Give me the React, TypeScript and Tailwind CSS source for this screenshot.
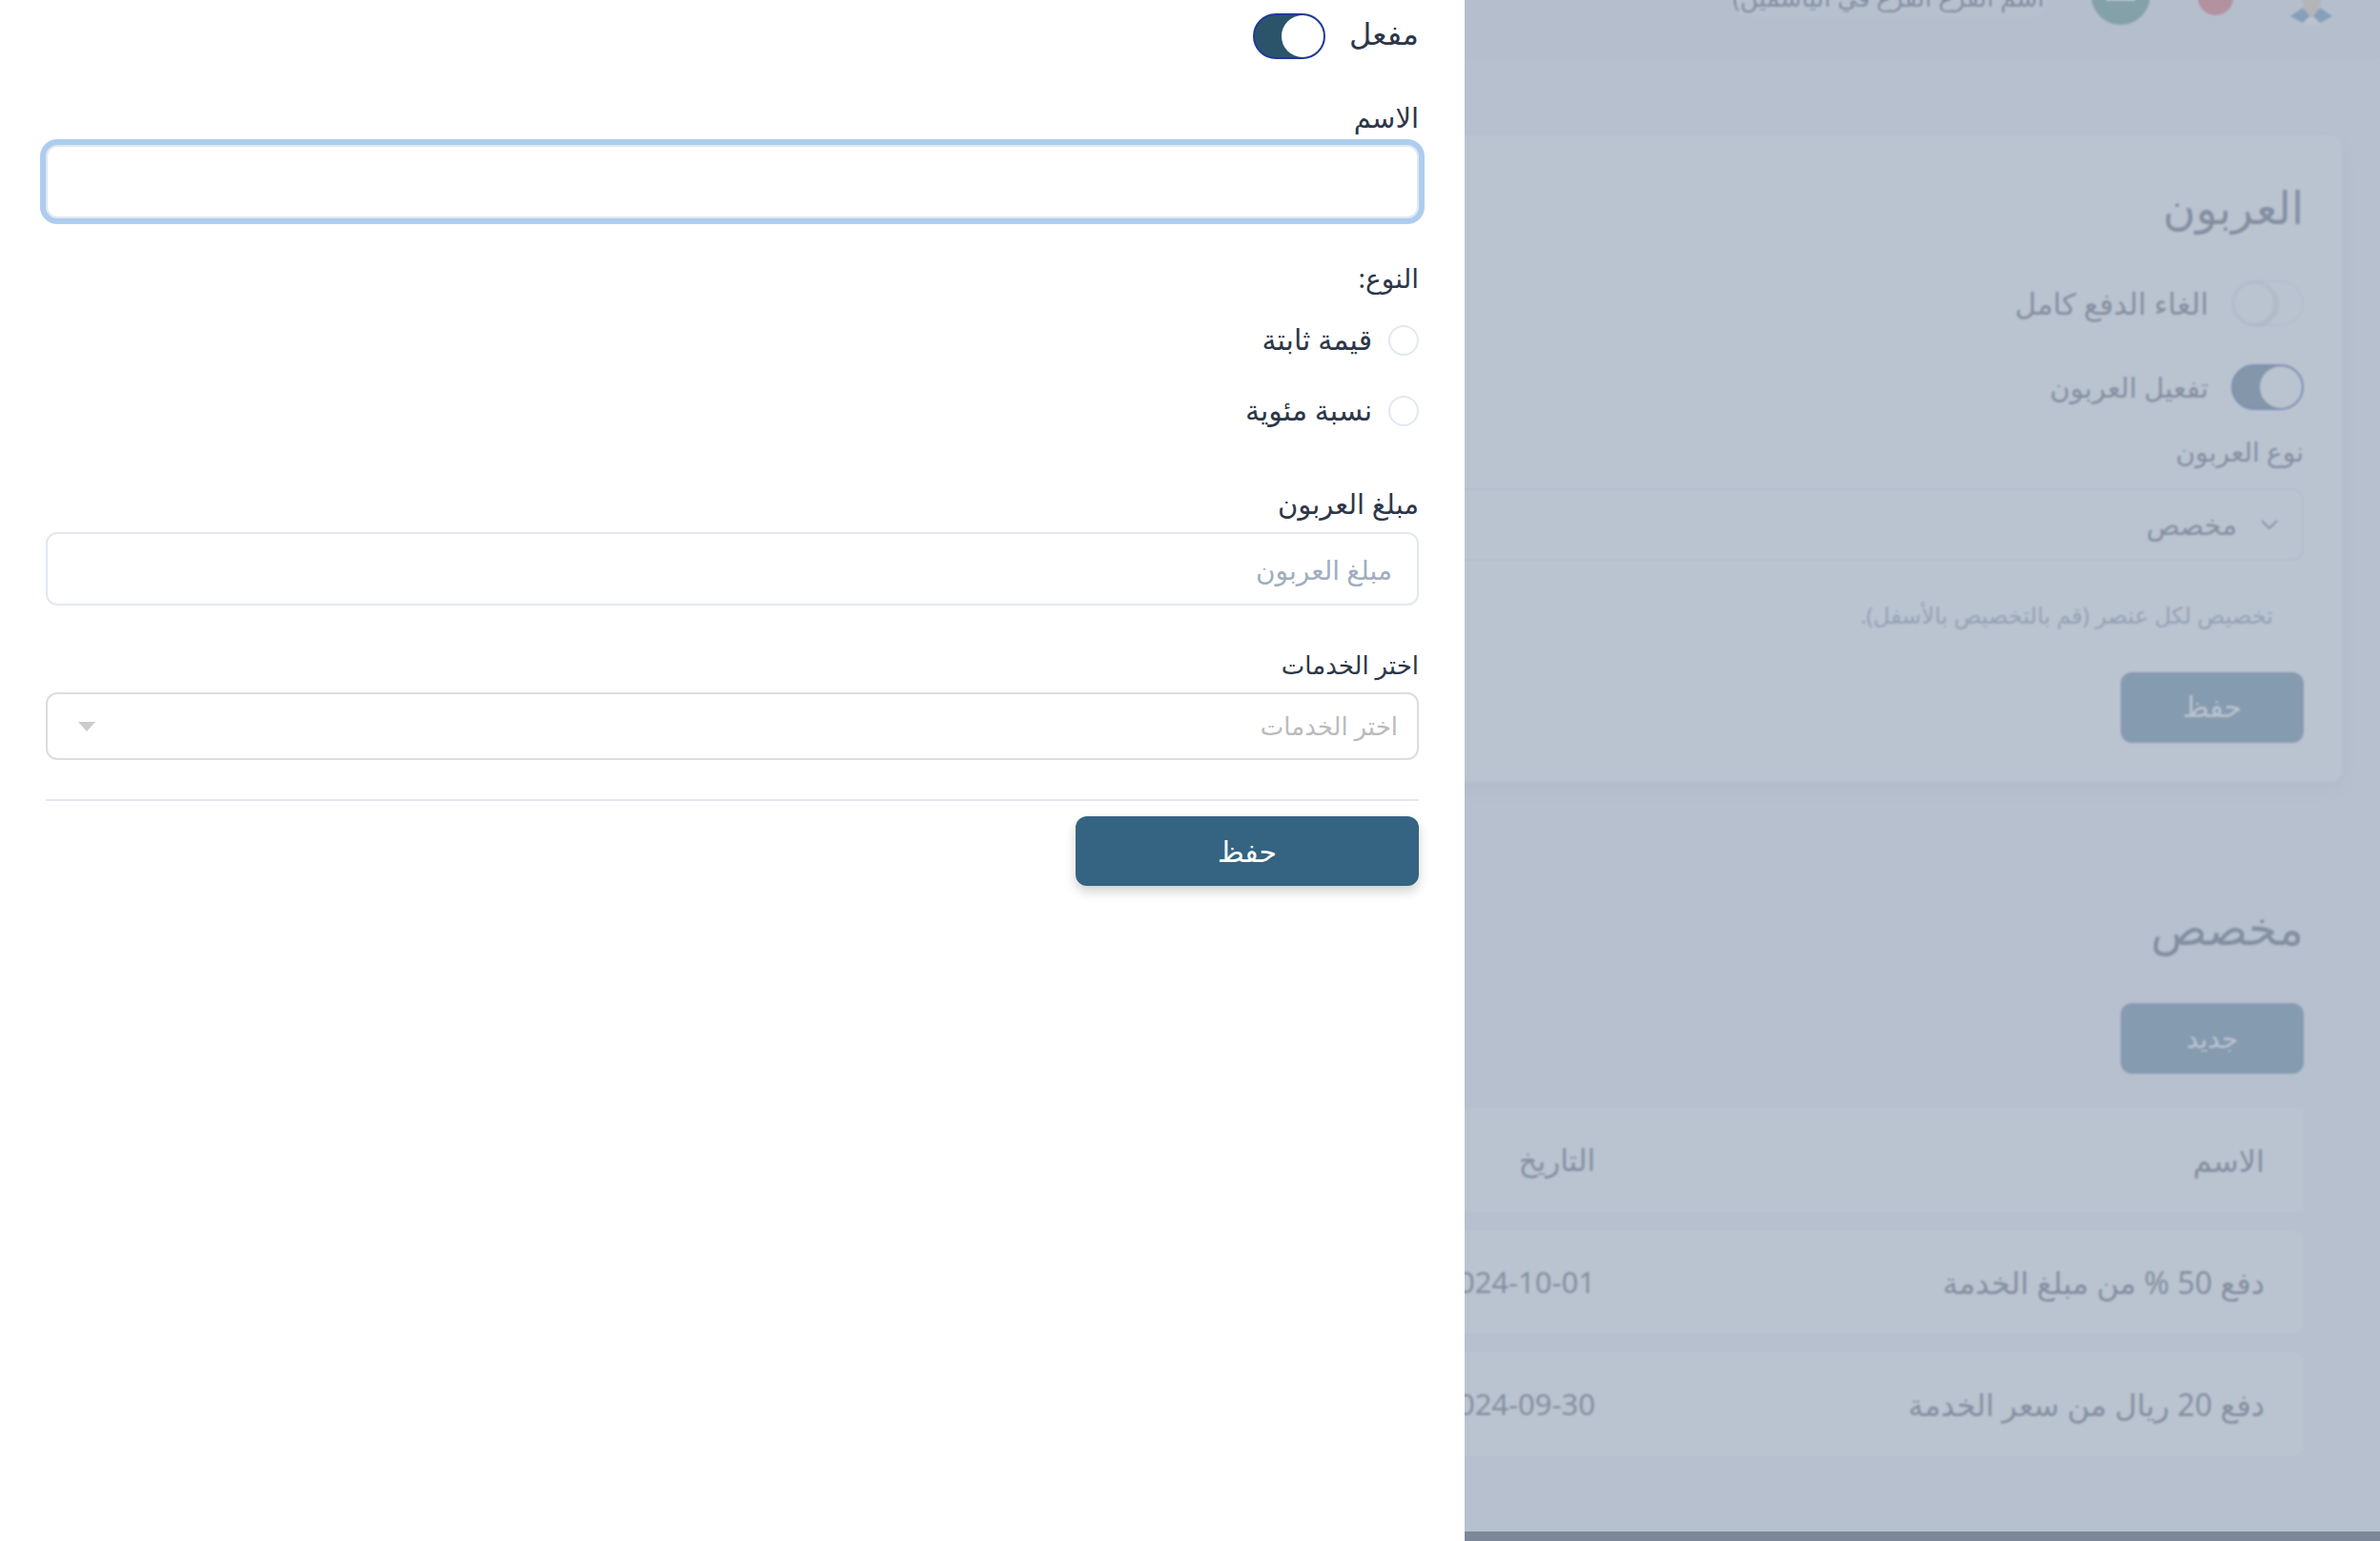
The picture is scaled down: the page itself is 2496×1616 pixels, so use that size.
const Toggle = ({ on }: { on: boolean }) => (
  <div
    className={`flex h-[48px] w-[76px] shrink-0 rounded-full border-2 ${
      on ? "border-[#1e3a9a] bg-[#2b546b] justify-start" : "border-[#e2e8f0] bg-white justify-end"
    }`}
  >
    <div
      className={`h-[44px] w-[44px] rounded-full bg-white ${
        on ? "" : "border-2 border-[#e2e8f0] shadow-[3px_1px_4px_rgba(0,0,0,0.2)]"
      }`}
    />
  </div>
);

const Label = ({ children, className }: { children: string; className?: string }) => (
  <div className={`h-[36px] whitespace-nowrap leading-[36px] text-[#2d3748] ${className ?? "text-[28px]"}`}>{children}</div>
);

const Radio = ({ text, className }: { text: string; className?: string }) => (
  <div className={`flex h-[32px] items-center gap-[17px] ${className ?? ""}`}>
    <div className="h-[32px] w-[32px] rounded-full border-2 border-[#e2e8f0] bg-white" />
    <span className="pb-[3px] text-[30px] text-[#2d3748]">{text}</span>
  </div>
);

const Row = ({ name, date, className }: { name: string; date: string; className?: string }) => (
  <div className={`flex h-[109px] items-center rounded-[12px] bg-white pr-[41px] text-[#2d3748] ${className ?? ""}`}>
    <div className="w-[702px] shrink-0 text-[32px]">{name}</div>
    <div className="text-[31px]">{date}</div>
  </div>
);

export default function App() {
  return (
    <div dir="rtl" className="relative flex h-[1616px] w-[2496px] overflow-hidden bg-[#eef1f5] font-['Noto_Sans','DejaVu_Sans',sans-serif]">
      {/* background page */}
      <div className="flex h-full w-[960px] shrink-0 flex-col overflow-hidden">
        <header className="flex h-[60px] shrink-0 items-start border-b-2 border-[#e2e6ec] bg-[#e9ecf0] pr-[49px]">
          <div className="relative -mt-[36px] h-[62px] w-[45px] shrink-0">
            <svg viewBox="0 0 45 62" className="h-[62px] w-[45px]">
              <circle cx="22" cy="36" r="10" fill="#e9c4a8" />
              <path d="M14 44 L30 44 L26 54 L18 54 Z" fill="#e9c4a8" />
              <path d="M12 54 L32 54 L32 62 L12 62 Z" fill="#ffffff" />
              <path d="M0 53 L13 44 L20 53 L13 60 Z" fill="#3b7aa6" />
              <path d="M44 53 L31 44 L24 53 L31 60 Z" fill="#3b7aa6" />
            </svg>
          </div>
          <div className="-mt-[21px] mr-[60px] flex h-[37px] w-[37px] shrink-0 items-start justify-center overflow-hidden rounded-full bg-[#e53e3e] text-[20px] leading-[26px] text-white">
            74
          </div>
          <div className="-mt-[36px] mr-[50px] flex h-[62px] w-[62px] shrink-0 items-center justify-center rounded-full bg-[#2f7d6d]">
            <div className="mt-[10px] h-[2px] w-[30px] bg-white" />
          </div>
          <div className="-mt-[23px] mr-[45px] flex h-[40px] items-center whitespace-nowrap rounded-full bg-[#f4f6f8] px-[4px] text-[26px] text-[#2d3748]">
            اسم الفرع الفرع في الياسمين)
          </div>
        </header>

        <main className="flex flex-1 flex-col pr-[40px]">
          <section className="mt-[82px] flex h-[678px] w-[1400px] shrink-0 flex-col rounded-[12px] bg-white pr-[40px] shadow-[0_8px_16px_rgba(0,0,0,0.08)]">
            <h2 className="mt-[47px] h-[56px] text-[47px] leading-[56px] text-[#2d3748]">العربون</h2>
            <div className="mt-[49px] flex items-center gap-[24px]">
              <Toggle on={false} />
              <span className="text-[31px] text-[#2d3748]">الغاء الدفع كامل</span>
            </div>
            <div className="mt-[40px] flex items-center gap-[24px]">
              <Toggle on />
              <span className="text-[29px] text-[#2d3748]">تفعيل العربون</span>
            </div>
            <Label className="mt-[25px] text-[28px]">نوع العربون</Label>
            <div className="mt-[21px] flex h-[76px] w-[1320px] items-center gap-[24px] rounded-[12px] border-2 border-[#e2e8f0] pr-[24px] text-[29px] text-[#2d3748]">
              <svg viewBox="0 0 20 12" className="h-[12px] w-[20px]" fill="none" stroke="#4a5568" strokeWidth="2">
                <path d="M2 2 L10 10 L18 2" />
              </svg>
              <span>مخصص</span>
            </div>
            <p className="mr-[32px] mt-[41px] h-[32px] text-[24px] leading-[32px] text-[#718096]">تخصيص لكل عنصر (قم بالتخصيص بالأسفل).</p>
            <button className="mt-[44px] h-[74px] w-[192px] rounded-[12px] bg-[#346482] pb-[3px] text-[30px] text-white">حفظ</button>
          </section>

          <section className="mr-[40px] flex w-[1360px] shrink-0 flex-col">
            <h2 className="mt-[122px] h-[60px] text-[49px] leading-[60px] text-[#2d3748]">مخصص</h2>
            <button className="mt-[50px] h-[74px] w-[192px] rounded-[12px] bg-[#346482] pb-[2px] text-[28px] text-white">جديد</button>
            <Row name="الاسم" date="التاريخ" className="mt-[36px] rounded-none" />
            <Row name="دفع 50 % من مبلغ الخدمة" date="2024-10-01" className="mt-[19px]" />
            <Row name="دفع 20 ريال من سعر الخدمة" date="2024-09-30" className="mt-[19px]" />
          </section>
        </main>
      </div>

      {/* dim layer over the page */}
      <div className="absolute bottom-0 left-[1536px] top-0 w-[960px] bg-[rgba(162,174,192,0.74)] backdrop-blur-[1px]" />
      <div className="absolute bottom-0 left-[1536px] h-[10px] w-[960px] bg-[#7c8899]" />

      {/* drawer */}
      <aside className="relative flex h-full w-[1536px] shrink-0 flex-col bg-white px-[48px] pt-[14px]">
        <div className="flex items-center gap-[25px]">
          <Label className="h-[48px] text-[32px] leading-[42px]">مفعل</Label>
          <Toggle on />
        </div>

        <Label className="mt-[43px] text-[29px] leading-[34px]">الاسم</Label>
        <input className="mt-[11px] h-[77px] w-full shrink-0 rounded-[12px] border-2 border-[#e2e8f0] bg-white px-[26px] text-[28px] shadow-[0_0_0_6px_#aecdee] outline-none" />

        <Label className="mt-[44px] text-[28px]">النوع:</Label>
        <Radio text="قيمة ثابتة" className="mt-[32px]" />
        <Radio text="نسبة مئوية" className="mt-[42px]" />

        <Label className="mt-[63px] text-[29px]">مبلغ العربون</Label>
        <input
          placeholder="مبلغ العربون"
          className="mt-[12px] h-[77px] w-full shrink-0 rounded-[12px] border-2 border-[#e2e8f0] bg-white px-[26px] text-[28px] outline-none placeholder:text-[#a0aec0]"
        />

        <Label className="mt-[44px] text-[26px]">اختر الخدمات</Label>
        <div className="mt-[11px] flex h-[71px] shrink-0 items-center justify-between rounded-[12px] border-2 border-[#dddddd] bg-white pl-[32px] pr-[20px]">
          <span className="text-[26px] text-[#bbbbbb]">اختر الخدمات</span>
          <svg viewBox="0 0 18 10" className="h-[10px] w-[18px]" fill="#cccccc">
            <path d="M0 0 H18 L9 10 Z" />
          </svg>
        </div>

        <div className="mt-[41px] h-[2px] shrink-0 bg-[#e5eaef]" />
        <button className="mt-[16px] h-[73px] w-[360px] shrink-0 rounded-[12px] bg-[#346482] text-[30px] text-white shadow-[0_6px_12px_rgba(0,0,0,0.18)]">
          حفظ
        </button>
      </aside>
    </div>
  );
}
